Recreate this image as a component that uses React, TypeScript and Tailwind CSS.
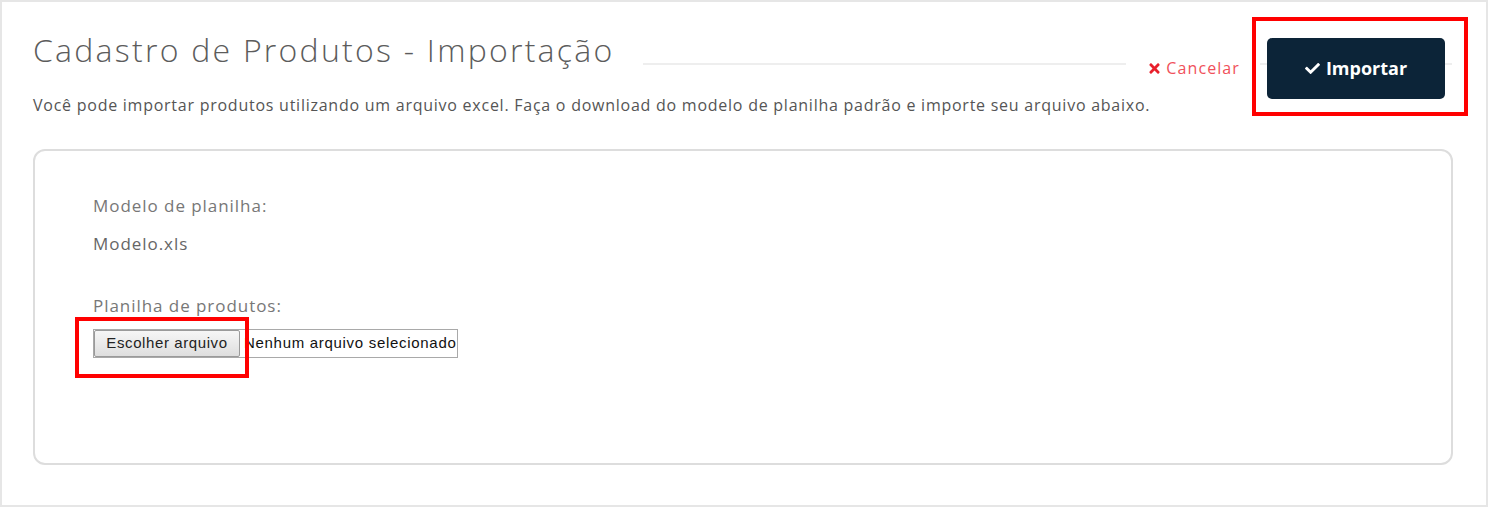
import { FaCheck, FaTimes } from "react-icons/fa";

export default function App() {
  return (
    <div className="relative w-[1490px] h-[508px] bg-white font-['Open_Sans',sans-serif]">
      <div className="w-[1488px] h-[507px] border-2 border-[#e6e6e6] bg-white pl-[31px] pr-[30px] pt-[28px]">
        <div className="flex items-start">
          <h1 className="text-[32px] leading-[40px] font-light text-[#5c5c5c] whitespace-nowrap tracking-[2.25px]">
            Cadastro de Produtos - Importação
          </h1>
          <div className="flex-1 h-[2px] bg-[#eeeeee] mt-[33px] ml-[29px]" />
          <a className="flex items-center gap-[6px] mt-[26px] pl-[23px] pr-[16px] text-[16px] leading-[24px] tracking-[1.1px] text-[#f0505a] cursor-pointer">
            <FaTimes className="h-[15px] w-[11px] text-[#e8202c]" />
            Cancelar
          </a>
          <div className="relative mt-[8px] px-[11px]">
            <div className="absolute left-[4px] right-[4px] top-[25px] h-[2px] bg-[#eeeeee]" />
            <button
              type="button"
              className="relative w-[178px] h-[61px] rounded-[5px] bg-[#0c2438] text-white text-[18px] font-bold flex items-center justify-center gap-[6px]"
            >
              <FaCheck className="w-[15px] h-[15px]" />
              Importar
            </button>
          </div>
        </div>
        <p className="-mt-[6px] text-[16px] leading-[24px] tracking-[0.75px] text-[#555555]">
          Você pode importar produtos utilizando um arquivo excel. Faça o download do modelo de planilha padrão e importe seu arquivo abaixo.
        </p>
        <div className="mt-[32px] w-[1420px] h-[316px] border-2 border-[#dddddd] rounded-[12px] pl-[58px] pt-[43px]">
          <div className="text-[17px] leading-[24px] tracking-[0.95px] text-[#777777]">Modelo de planilha:</div>
          <div className="mt-[14px] text-[17px] leading-[24px] tracking-[0.95px] text-[#666666]">Modelo.xls</div>
          <div className="mt-[38px] text-[17px] leading-[24px] tracking-[0.95px] text-[#777777]">Planilha de produtos:</div>
          <div className="mt-[11px] flex items-center w-[365px] h-[29px] border border-[#a9a9a9] bg-white overflow-hidden font-['Liberation_Sans',Arial,sans-serif]">
            <button
              type="button"
              className="h-[27px] w-[146px] shrink-0 border border-[#9a9a9a] rounded-[2px] bg-[linear-gradient(#f6f6f6,#dedede)] text-[15px] text-[#222222] tracking-[0.6px]"
            >
              Escolher arquivo
            </button>
            <span className="-ml-[1px] pl-[5px] text-[15px] text-[#111111] whitespace-nowrap tracking-[0.7px]">
              Nenhum arquivo selecionado
            </span>
          </div>
        </div>
      </div>
      <div className="absolute left-[1252px] top-[17px] w-[216px] h-[99px] border-4 border-[#ff0000]" />
      <div className="absolute left-[75px] top-[317px] w-[174px] h-[61px] border-4 border-[#ff0000]" />
    </div>
  );
}
